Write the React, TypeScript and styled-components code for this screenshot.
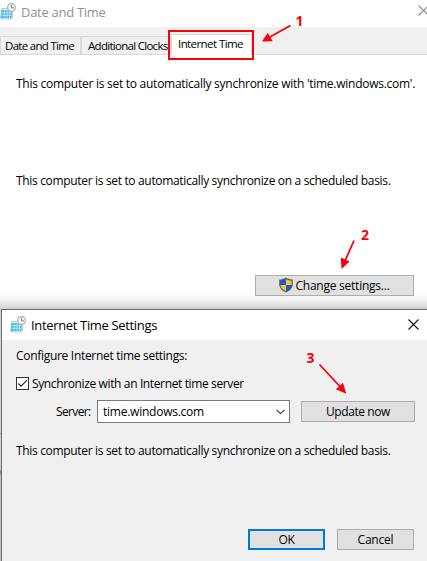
import React from 'react';
import styled, { createGlobalStyle } from 'styled-components';

const GlobalStyle = createGlobalStyle`
  * { box-sizing: border-box; }
  body { margin: 0; background: #fff; }
`;

const Screen = styled.div`
  position: relative;
  display: flex;
  flex-direction: column;
  width: 427px;
  height: 561px;
  overflow: hidden;
  background: #fff;
  color: #000;
  font-family: 'Open Sans', 'Noto Sans', sans-serif;
  font-size: 12px;
  line-height: 16px;
`;

const Label = styled.span<{ $track?: number }>`
  white-space: pre;
  letter-spacing: ${p => p.$track ?? 0}px;
`;

/* Background window */
const BackWindow = styled.section`
  display: flex;
  flex-direction: column;
  height: 309px;
  flex: none;
  background: linear-gradient(#fff 0 290px, #fdfdfd 294px, #f2f2f2 301px, #d0d0d0 309px);
`;

const TitleBar = styled.header<{ $dialog?: boolean }>`
  display: flex;
  align-items: flex-start;
  flex: none;
  height: ${p => (p.$dialog ? 30 : 27)}px;
  padding: ${p => (p.$dialog ? '6px 0 0 8px' : '3px 0 0 0')};
  background: #fff;
  color: ${p => (p.$dialog ? '#000' : '#929292')};
  font-size: 13px;
  line-height: 18px;

  > span { margin-left: 5px; }
`;

const CloseIcon = styled.svg<{ $right: number; $top: number }>`
  flex: none;
  margin-left: auto;
  margin-top: ${p => p.$top}px;
  margin-right: ${p => p.$right}px;
`;

const Tabs = styled.nav`
  display: flex;
  align-items: flex-end;
  flex: none;
  height: 28px;
  background: linear-gradient(#f0f0f0 0 27px, #d9d9d9 27px);
`;

const Tab = styled.div<{ $width: number; $active?: boolean }>`
  width: ${p => p.$width}px;
  height: ${p => (p.$active ? 21 : 19)}px;
  padding: ${p => (p.$active ? '1px 0 0 6px' : '1px 0 0 4px')};
  background: ${p => (p.$active ? '#fff' : '#f0f0f0')};
  border: 1px solid #d9d9d9;
  border-bottom-color: ${p => (p.$active ? '#fff' : '#d9d9d9')};
  & + & {
    border-left-width: ${p => (p.$active ? 1 : 0)}px;
    padding-left: ${p => (p.$active ? 6 : 5.5)}px;
  }
  font-size: 11.5px;
`;

const BackBody = styled.div`
  display: flex;
  flex-direction: column;
  flex: 1;
  padding: 21px 13px 0 16px;
`;

const Message = styled.p<{ $gap?: number }>`
  margin: ${p => p.$gap ?? 0}px 0 0;
  height: 16px;
`;

const Button = styled.button<{ $width: number; $primary?: boolean }>`
  display: flex;
  align-items: center;
  justify-content: center;
  flex: none;
  width: ${p => p.$width}px;
  height: 21px;
  padding: 1px 0 0;
  color: #000;
  background: #e1e1e1;
  border: ${p => (p.$primary ? '2px solid #0078d7' : '1px solid #adadad')};
  font: inherit;

  > svg { margin: -2px 1px 0 -1px; }
`;

const SettingsAction = styled.div`
  display: flex;
  justify-content: flex-end;
  margin-top: 86px;
`;

/* Foreground dialog */
const DialogFrame = styled.div`
  display: flex;
  flex: 1;
  padding-left: 1px;
  background: linear-gradient(#d4d4d4 0 124px, #a8a8a8 124px 125px, #d0d0d0 125px 160px, #8e8e8e 162px 164px, #c2c2c2 168px);
`;

const Dialog = styled.section`
  display: flex;
  flex-direction: column;
  flex: 1;
  border: 1px solid #6b6b6b;
  border-right: 0;
  border-bottom: 0;
  background: #f0f0f0;
`;

const DialogBody = styled.div`
  display: flex;
  flex-direction: column;
  flex: 1;
  padding: 8px 12px 11px 14px;
`;

const CheckRow = styled.label`
  display: flex;
  align-items: center;
  height: 16px;
  margin-top: 11px;
  gap: 3px;

  > :last-child { padding-top: 2px; }
`;

const CheckBox = styled.span`
  display: flex;
  width: 13px;
  height: 13px;
  background: #fff;
  border: 1px solid #333;
`;

const ServerRow = styled.div`
  display: flex;
  align-items: center;
  height: 23px;
  margin-top: 9px;
  padding-left: 40px;

  > :first-child { padding-top: 1px; }
`;

const Combo = styled.div`
  display: flex;
  align-items: center;
  justify-content: space-between;
  width: 193px;
  height: 23px;
  margin: 0 11px 0 auto;
  padding: 0 4px 0 5px;
  background: #fff;
  border: 1px solid #7a7a7a;
`;

const Footer = styled.footer`
  display: flex;
  justify-content: flex-end;
  gap: 12px;
  margin-top: auto;
  padding-right: 1px;
`;

/* Callouts drawn over both windows */
const Highlight = styled.div`
  position: absolute;
  left: 168px;
  top: 30px;
  width: 86px;
  height: 30px;
  border: 2px solid #fb0007;
`;

const Arrows = styled.svg`
  position: absolute;
  inset: 0;
  pointer-events: none;
`;

const Step = styled.span<{ $x: number; $y: number }>`
  position: absolute;
  left: ${p => p.$x}px;
  top: ${p => p.$y}px;
  color: #fb0007;
  font: 700 14px/18px 'Noto Sans', 'Open Sans', sans-serif;
`;

const CalendarIcon = () => (
  <svg width="16" height="18" viewBox="0 0 16 18">
    <path d="M1.500 5.500h11v9l-1 1.500H.500z" fill="#d8f0f8" stroke="#a9c7d2" strokeWidth=".8" />
    <path d="M1.500 7h10.500l-.6 8H1z" fill="#45b6de" />
    <path d="M1.500 9.700h10M1.300 12.300h10M4.500 7l-.5 8M7 7v8M9.500 7v8" stroke="#d8f3fb" strokeWidth=".7" />
    <circle cx="11.500" cy="4.500" r="3.900" fill="#f4f5f5" stroke="#a6abae" strokeWidth="1.100" />
    <path d="M11.500 2V4.900H14" fill="none" stroke="#777" strokeWidth=".9" />
  </svg>
);

const Close = ({ color, right, top }: { color: string; right: number; top: number }) => (
  <CloseIcon $right={right} $top={top} width="11" height="11" viewBox="0 0 11 11">
    <path d="M.5.5l10 10M10.500.5l-10 10" stroke={color} strokeWidth="1.100" />
  </CloseIcon>
);

const ShieldIcon = () => (
  <svg width="16" height="16" viewBox="0 0 16 16">
    <path d="M8 .5C6 2 3.500 2.500 1.200 2.500V7c0 4.200 3 6.800 6.800 8.500 3.800-1.700 6.800-4.300 6.800-8.500V2.500C12.500 2.500 10 2 8 .5z" fill="#565a60" />
    <path d="M8 2C6.300 3.100 4.300 3.600 2.400 3.700V8H8z" fill="#0a64cf" />
    <path d="M8 2c1.700 1.100 3.700 1.600 5.600 1.700V8H8z" fill="#fdc13c" />
    <path d="M2.400 8H8v6.200C5 12.800 2.700 10.800 2.400 8z" fill="#fdc13c" />
    <path d="M13.600 8H8v6.200c3-1.400 5.300-3.400 5.600-6.200z" fill="#0a64cf" />
  </svg>
);

export default function App() {
  return (
    <Screen>
      <GlobalStyle />
      <BackWindow>
        <TitleBar>
          <CalendarIcon />
          <Label $track={-0.29}>Date and Time</Label>
          <Close color="#8c8c8c" right={-2} top={2} />
        </TitleBar>
        <Tabs>
          <Tab $width={81}><Label $track={-0.7}>Date and Time</Label></Tab>
          <Tab $width={90}><Label $track={-0.71}>Additional Clocks</Label></Tab>
          <Tab $width={81} $active><Label $track={-0.58}>Internet Time</Label></Tab>
        </Tabs>
        <BackBody>
          <Message><Label $track={-0.265}>This computer is set to automatically synchronize with 'time.windows.com'.</Label></Message>
          <Message $gap={81}><Label $track={-0.331}>This computer is set to automatically synchronize on a scheduled basis.</Label></Message>
          <SettingsAction>
            <Button $width={159}><ShieldIcon /><Label $track={-0.24}>Change settings...</Label></Button>
          </SettingsAction>
        </BackBody>
      </BackWindow>

      <DialogFrame>
        <Dialog>
          <TitleBar $dialog>
            <CalendarIcon />
            <Label $track={-0.34}>Internet Time Settings</Label>
            <Close color="#111" right={8} top={3} />
          </TitleBar>
          <DialogBody>
            <Message><Label $track={-0.3}>Configure Internet time settings:</Label></Message>
            <CheckRow>
              <CheckBox>
                <svg width="11" height="11" viewBox="0 0 11 11">
                  <path d="M1.300 5.500l2.700 2.700L9.800 2.400" fill="none" stroke="#222" strokeWidth="1.200" />
                </svg>
              </CheckBox>
              <Label $track={-0.37}>Synchronize with an Internet time server</Label>
            </CheckRow>
            <ServerRow>
              <Label $track={-0.64}>Server:</Label>
              <Combo>
                <Label $track={-0.24}>time.windows.com</Label>
                <svg width="9" height="6" viewBox="0 0 9 6">
                  <path d="M.6.8l3.900 3.900L8.400.8" fill="none" stroke="#444" strokeWidth="1.200" />
                </svg>
              </Combo>
              <Button $width={114}><Label $track={-0.41}>Update now</Label></Button>
            </ServerRow>
            <Message $gap={20}><Label $track={-0.331}>This computer is set to automatically synchronize on a scheduled basis.</Label></Message>
            <Footer>
              <Button $width={77} $primary><Label $track={-0.3}>OK</Label></Button>
              <Button $width={77}><Label $track={-0.2}>Cancel</Label></Button>
            </Footer>
          </DialogBody>
        </Dialog>
      </DialogFrame>

      <Highlight />
      <Arrows width="427" height="561" viewBox="0 0 427 561" fill="#fb0007" stroke="#fb0007">
        <path d="M290.500 25.500L269 37.500M354 240.500L345 261M319.500 364.500L340 386.500" strokeWidth="1.800" />
        <path stroke="none" d="M262 41.500l5.700-8.800 5 8.600zM341.500 269l-.7-11.500 8.800 4zM346.300 393.800l-10.500-4.500 7.200-6.600z" />
      </Arrows>
      <Step $x={295.5} $y={12}>1</Step>
      <Step $x={361} $y={226}>2</Step>
      <Step $x={306.5} $y={349}>3</Step>
    </Screen>
  );
}
